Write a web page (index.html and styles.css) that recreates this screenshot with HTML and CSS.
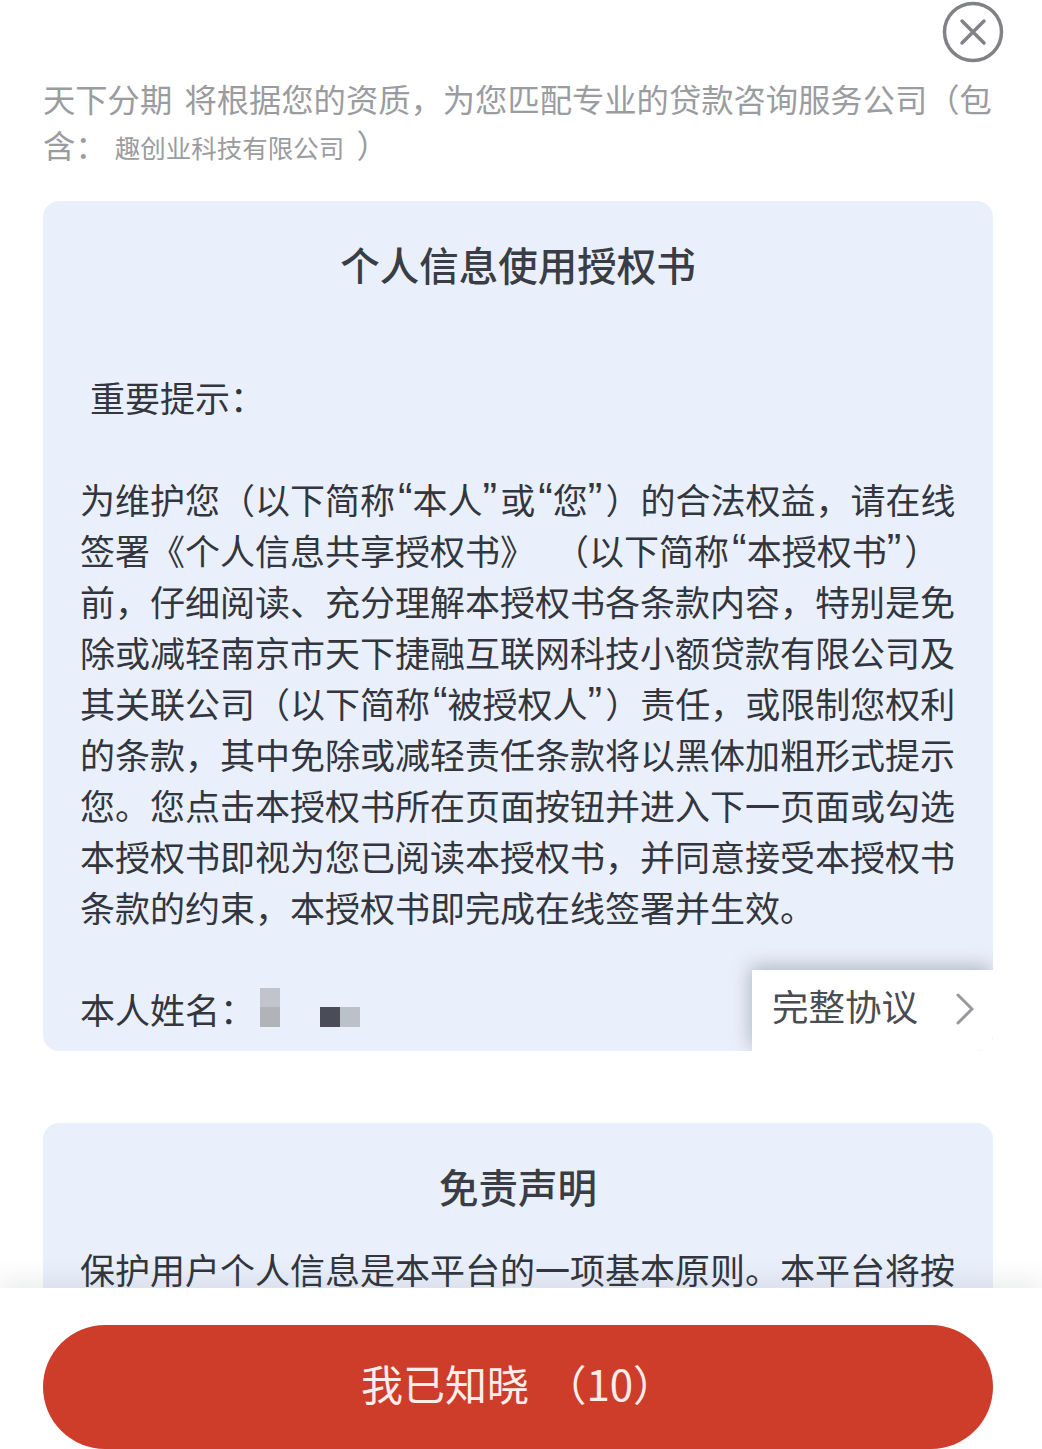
FILE: index.html
```html
<!DOCTYPE html>
<html lang="zh-CN">

<head>
  <meta charset="UTF-8" />
  <meta name="viewport" content="width=device-width, initial-scale=1" />
  <title>个人信息使用授权书</title>
  <link rel="stylesheet" href="styles.css">
</head>

<body>

  <main class="content">
    <div class="close-row">
      <button class="close-btn" aria-label="关闭">
        <svg width="62" height="62" viewBox="0 0 62 62" fill="none" stroke="#808285" stroke-linecap="round">
          <circle cx="31" cy="31" r="28.5" stroke-width="3.5" />
          <path d="M20 20 L42 42 M42 20 L20 42" stroke-width="3.5" />
        </svg>
      </button>
    </div>

    <p class="intro">天下分期 将根据您的资质，为您匹配专业的贷款咨询服务公司（包含： <span class="company">趣创业科技有限公司</span> ）</p>

    <section class="card card-auth">
      <h2 class="card-title">个人信息使用授权书</h2>
      <p class="notice">重要提示：</p>
      <p class="card-text">为维护您（以下简称<span class="ql">“</span>本人<span class="qr">”</span>或<span class="ql">“</span>您<span class="qr">”</span>）的合法权益，请在线签署《个人信息共享授权书》<span class="gap">（</span>以下简称<span class="ql">“</span>本授权书<span class="qr">”</span>）前，仔细阅读、充分理解本授权书各条款内容，特别是免除或减轻南京市天下捷融互联网科技小额贷款有限公司及其关联公司（以下简称<span class="ql">“</span>被授权人<span class="qr">”</span>）责任，或限制您权利的条款，其中免除或减轻责任条款将以黑体加粗形式提示您。您点击本授权书所在页面按钮并进入下一页面或勾选本授权书即视为您已阅读本授权书，并同意接受本授权书条款的约束，本授权书即完成在线签署并生效。</p>
      <div class="name-row">
        <span>本人姓名：</span>
        <span class="blur-tall"></span>
        <span class="blur-wide"></span>
      </div>
      <a class="full-link">
        <span class="full-link-text">完整协议</span>
        <svg class="chevron" width="18" height="32" viewBox="0 0 18 32" fill="none" stroke="#96989c" stroke-width="3" stroke-linecap="round">
          <path d="M2 2 L16 16 L2 30" />
        </svg>
      </a>
    </section>

    <section class="card card-disclaimer">
      <h2 class="card-title">免责声明</h2>
      <p class="card-text">保护用户个人信息是本平台的一项基本原则。本平台将按</p>
    </section>
  </main>

  <footer class="footer">
    <button class="confirm-btn">我已知晓 （10）</button>
  </footer>

</body>

</html>
```

FILE: styles.css
```css
* {
  box-sizing: border-box;
}

html,
body {
  margin: 0;
  height: 100%;
}

body {
  width: 1042px;
  height: 1449px;
  overflow: hidden;
  display: flex;
  flex-direction: column;
  background: #fff;
  font-family: "Noto Sans CJK SC", "Liberation Sans", sans-serif;
  text-spacing-trim: space-all;
}

.content {
  height: 1288px;
  flex: none;
  overflow: hidden;
  padding: 0 49px 0 43px;
}

.close-row {
  height: 75px;
  display: flex;
  justify-content: flex-end;
  margin-right: -11px;
}

.close-btn {
  width: 62px;
  height: 62px;
  padding: 0;
  margin-top: 1px;
  border: none;
  background: none;
}

.intro {
  margin: 0 0 34px;
  font-size: 32.3px;
  line-height: 46px;
  word-spacing: 5px;
  color: #9a9c9f;
}

.company {
  font-size: 25.5px;
  line-height: 1;
  margin-left: -5px;
}

.card {
  position: relative;
  width: 950px;
  background: #eaf0fb;
  border-radius: 16px;
  overflow: hidden;
  color: #33363d;
}

.card-auth {
  height: 850px;
  padding: 36px 37px 0;
}

.card-disclaimer {
  height: 300px;
  margin-top: 72px;
  padding: 36px 37px 0;
}

.card-title {
  margin: 0;
  font-size: 39.5px;
  font-weight: 500;
  line-height: 54px;
  text-align: center;
  color: #3a3d44;
}

.notice {
  margin: 79px 0 0 10px;
  font-size: 35px;
  line-height: 54px;
}

.card-text {
  margin: 0;
  font-size: 35px;
  line-height: 51px;
}

/* 引号按半角宽度排 */
.ql,
.qr {
  font-family: "Liberation Sans", sans-serif;
  font-size: 1.25em;
  line-height: 0;
}

.ql {
  padding-left: 3px;
}

.qr {
  padding-right: 3px;
}

.gap {
  padding-left: 19px;
}

.card-auth .card-text {
  margin-top: 49px;
}

.card-disclaimer .card-text {
  margin-top: 30px;
}

.name-row {
  display: flex;
  align-items: center;
  height: 51px;
  margin-top: 51px;
  font-size: 35px;
}

.blur-tall {
  width: 20px;
  height: 39px;
  margin-left: 5px;
  margin-top: -3px;
  background: linear-gradient(#c0c4cc 50%, #b0b3b8 50%);
}

.blur-wide {
  width: 40px;
  height: 20px;
  margin-left: 40px;
  margin-top: 17px;
  background: linear-gradient(90deg, #4a4c58 50%, #bcc0c8 50%);
}

.full-link {
  position: absolute;
  right: 0;
  bottom: 0;
  width: 241px;
  height: 81px;
  padding: 0 19px 0 20px;
  display: flex;
  align-items: center;
  justify-content: space-between;
  background: #fff;
  box-shadow: -2px -4px 18px rgba(90, 95, 115, 0.4);
  font-size: 36.5px;
  color: #4a4c52;
}

.full-link-text {
  margin-bottom: 10px;
}

.chevron {
  margin-bottom: 3px;
}

.footer {
  position: relative;
  height: 161px;
  flex: none;
  padding: 37px 49px 0 43px;
  background: #fff;
  box-shadow: 0 -8px 24px rgba(60, 65, 80, 0.1);
}

.confirm-btn {
  display: block;
  width: 950px;
  height: 124px;
  border: none;
  border-radius: 62px;
  background: #cd3d2a;
  color: #fbeeea;
  font-family: inherit;
  font-size: 42px;
  line-height: 116px;
  word-spacing: 6px;
  padding: 0 0 8px;
}
```
